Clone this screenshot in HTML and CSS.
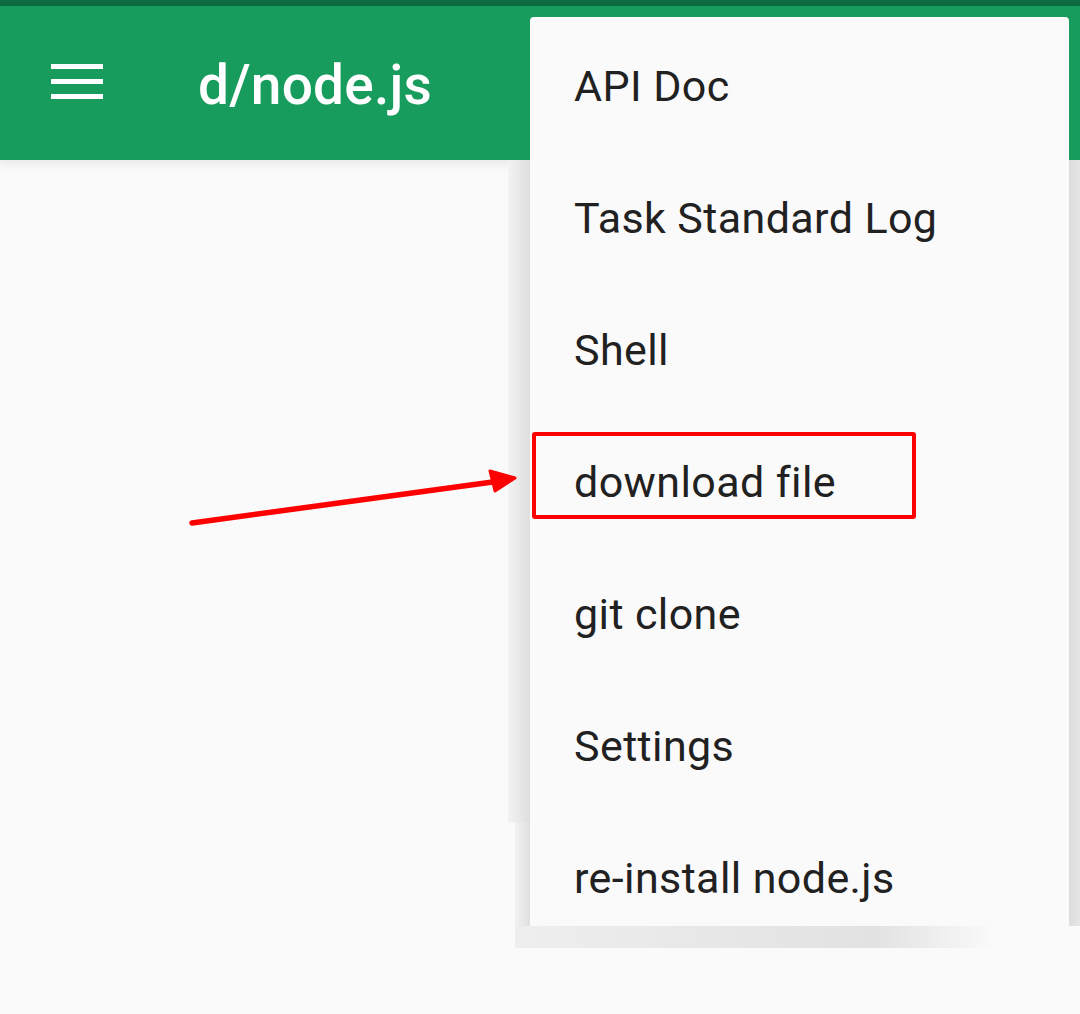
FILE: index.html
```html
<!DOCTYPE html>
<html>
<head>
<meta charset="utf-8">
<link rel="stylesheet" href="styles.css">
</head>
<body>
<div class="status-bar"></div>
<header class="app-bar">
  <div class="hamburger"><span></span><span></span><span></span></div>
  <h1 class="title">d/node.js</h1>
</header>
<main class="content"></main>

<div class="menu-shadow-left"></div>
<div class="menu-shadow-left2"></div>
<div class="menu-shadow-right"></div>
<div class="menu-shadow-bottom"></div>
<nav class="menu">
  <div class="menu-item">API Doc</div>
  <div class="menu-item">Task Standard Log</div>
  <div class="menu-item">Shell</div>
  <div class="menu-item">download file</div>
  <div class="menu-item">git clone</div>
  <div class="menu-item">Settings</div>
  <div class="menu-item">re-install node.js</div>
</nav>

<div class="highlight-box"></div>
<svg class="arrow" width="1080" height="1014" viewBox="0 0 1080 1014">
  <line x1="192" y1="523" x2="500" y2="481" stroke="#ff0000" stroke-width="5.5" stroke-linecap="round"/>
  <polygon points="490,471 515,478 495,491" fill="#ff0000" stroke="#ff0000" stroke-width="3" stroke-linejoin="round"/>
</svg>
</body>
</html>
```
FILE: styles.css
```css
html, body {
  margin: 0;
  padding: 0;
}
body {
  width: 1080px;
  height: 1014px;
  background: #fafafa;
  font-family: Roboto, "Liberation Sans", sans-serif;
  overflow: hidden;
  position: relative;
}
.status-bar {
  height: 6px;
  background: #0c6b41;
}
.app-bar {
  height: 154px;
  background: #189c5d;
  display: flex;
  align-items: center;
  box-shadow: 0 4px 10px rgba(0, 0, 0, 0.08);
  position: relative;
  z-index: 1;
}
.hamburger {
  width: 52px;
  height: 35px;
  margin-left: 51px;
  margin-top: -3px;
  display: flex;
  flex-direction: column;
  justify-content: space-between;
}
.hamburger span {
  display: block;
  height: 5px;
  background: #ffffff;
}
.title {
  margin: 0 0 0 95px;
  padding-top: 4px;
  color: #ffffff;
  font-size: 55px;
  font-weight: 500;
  letter-spacing: 0.2px;
}
.content {
  height: 854px;
}
.menu {
  position: absolute;
  left: 530px;
  top: 17px;
  width: 539px;
  height: 909px;
  padding-top: 3px;
  box-sizing: border-box;
  background: #fafafa;
  border-radius: 4px;
  z-index: 3;
  overflow: hidden;
}
.menu-item {
  height: 132px;
  display: flex;
  align-items: center;
  padding-left: 44px;
  font-size: 43px;
  letter-spacing: 0.4px;
  color: #212121;
}
.menu-shadow-left {
  position: absolute;
  left: 508px;
  top: 160px;
  width: 22px;
  height: 662px;
  background: linear-gradient(to right, #f3f3f3, #dedede);
  z-index: 2;
}
.menu-shadow-left2 {
  position: absolute;
  left: 515px;
  top: 822px;
  width: 15px;
  height: 104px;
  background: linear-gradient(to right, #f2f2f2, #dfdfdf);
  z-index: 2;
}
.menu-shadow-right {
  position: absolute;
  left: 1069px;
  top: 160px;
  width: 11px;
  height: 766px;
  background: linear-gradient(to right, #dcdcdc, #e6e6e6);
  z-index: 2;
}
.menu-shadow-bottom {
  position: absolute;
  left: 515px;
  top: 926px;
  width: 480px;
  height: 22px;
  background: linear-gradient(to right, #eeeeee 0%, #e2e2e2 75%, #fafafa 100%);
  z-index: 2;
}
.highlight-box {
  position: absolute;
  left: 532px;
  top: 432px;
  width: 376px;
  height: 79px;
  border: 4px solid #ff0000;
  border-radius: 3px;
  z-index: 4;
}
.arrow {
  position: absolute;
  left: 0;
  top: 0;
  z-index: 4;
}
```
